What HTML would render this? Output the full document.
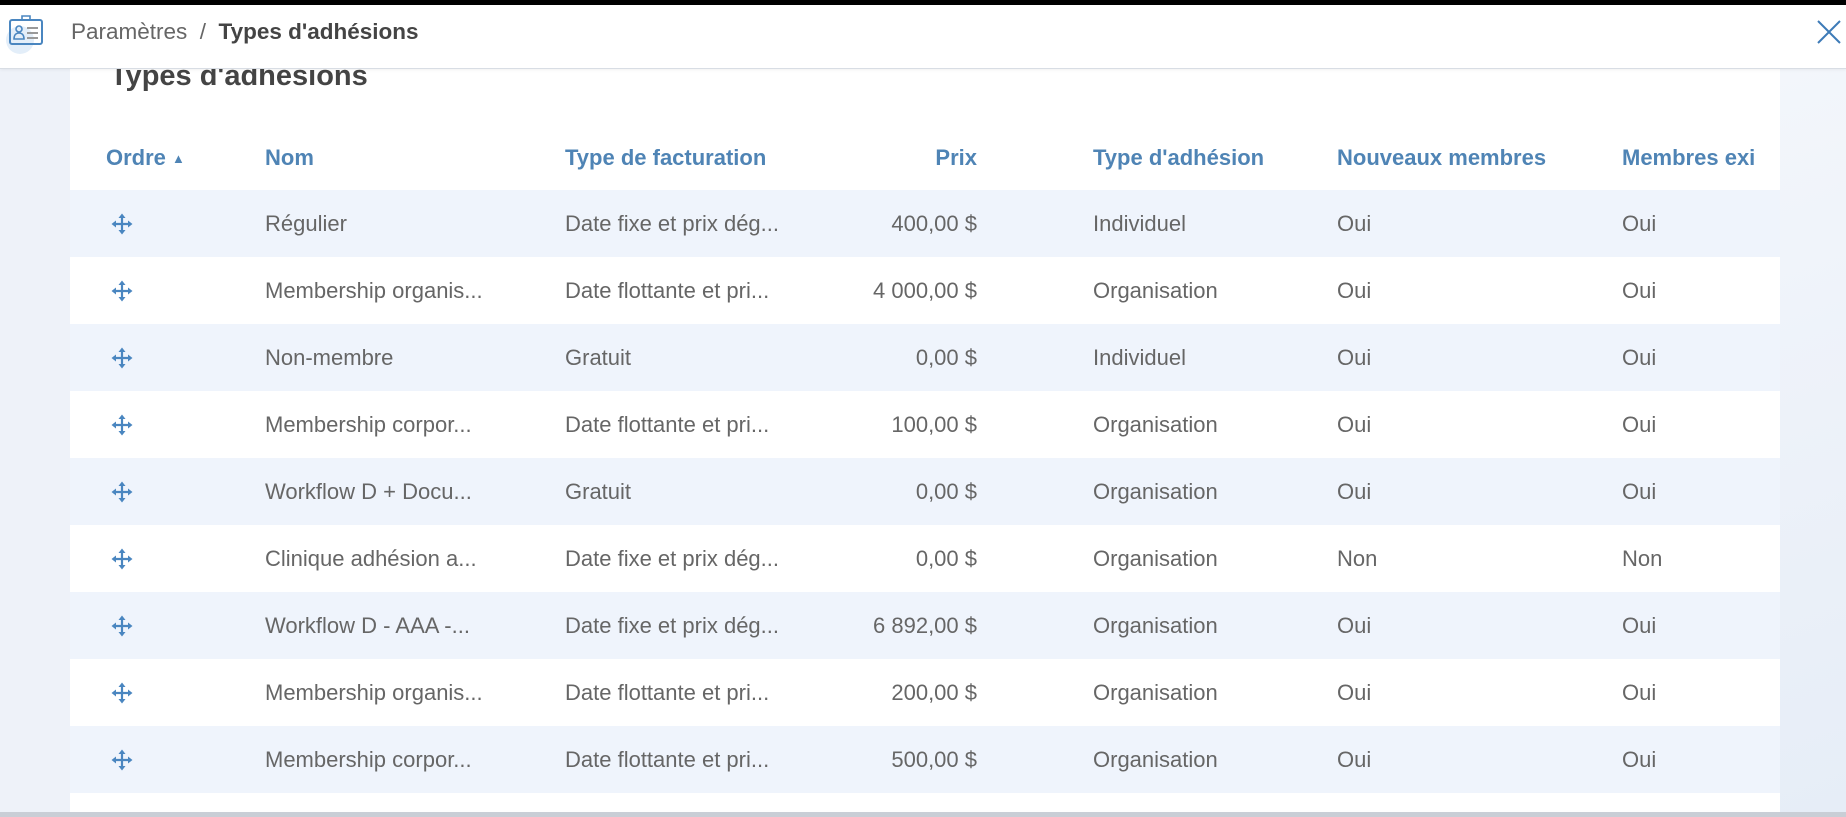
<!DOCTYPE html>
<html><head><meta charset="utf-8"><style>
*{margin:0;padding:0;box-sizing:border-box}
body{width:1846px;height:817px;overflow:hidden;background:#eef2f9;font-family:"Liberation Sans",sans-serif;position:relative}
.top{position:absolute;left:0;top:0;width:1846px;height:5px;background:#000}
.hdr{position:absolute;left:0;top:5px;width:1846px;height:64px;background:#fff;border-bottom:1px solid #d8dde4;z-index:3;box-shadow:0 1px 3px rgba(0,0,0,.06)}
.crumb{position:absolute;left:71px;top:14px;font-size:22.5px;color:#666}
.crumb b{color:#444}
.card{position:absolute;left:70px;top:69px;width:1710px;height:744px;background:#fff}
.rightbg{position:absolute;left:1780px;top:69px;width:66px;height:744px;background:linear-gradient(160deg,#f3f6fb,#e6edf7)}
.title{position:absolute;left:110px;top:60px;font-size:29px;font-weight:bold;color:#444;z-index:1}
.th{position:absolute;top:145px;font-size:22px;color:#4f84b5;font-weight:bold;z-index:1;white-space:nowrap}
.row{position:absolute;left:70px;width:1710px;height:67px}
.row.s{background:#eff4fc}
.c{position:absolute;top:21px;font-size:22px;color:#666;white-space:nowrap}
.bottom{position:absolute;left:0;top:812px;width:1846px;height:5px;background:#c9ced6}
</style></head><body>
<div class="top"></div>
<div class="rightbg"></div>
<div class="card"></div>
<div class="hdr">
<svg style="position:absolute;left:6px;top:9px" width="44" height="42" viewBox="0 0 44 42"><circle cx="14" cy="26" r="14" fill="#dceaf7" opacity=".8"/><rect x="4" y="6" width="32" height="24" rx="2" fill="none" stroke="#4a86c0" stroke-width="2"/><path d="M16 6V2h8v4" fill="none" stroke="#4a86c0" stroke-width="1.6"/><circle cx="13" cy="15" r="3" fill="none" stroke="#4a86c0" stroke-width="1.6"/><path d="M8 25c0-4 2-6 5-6s5 2 5 6z" fill="none" stroke="#4a86c0" stroke-width="1.6"/><path d="M21 14h11M21 19h11M21 24h11" stroke="#999" stroke-width="2"/></svg>
<div class="crumb">Paramètres&nbsp; / &nbsp;<b>Types d'adhésions</b></div>
<svg style="position:absolute;left:1816px;top:14px" width="26" height="26" viewBox="0 0 26 26"><path d="M2 2L24 24M24 2L2 24" stroke="#3d7bb7" stroke-width="2"/></svg>
</div>
<div class="title">Types d'adhésions</div>
<div class="th" style="left:106px">Ordre <span style="font-size:13px;position:relative;top:-2px">&#9650;</span></div>
<div class="th" style="left:265px">Nom</div>
<div class="th" style="left:565px">Type de facturation</div>
<div class="th" style="right:869px">Prix</div>
<div class="th" style="left:1093px">Type d'adhésion</div>
<div class="th" style="left:1337px">Nouveaux membres</div>
<div class="th" style="left:1622px;width:132px;overflow:hidden">Membres existants</div>
<div id="rows"></div>
<div class="bottom"></div>
<script>
var d=[["Régulier","Date fixe et prix dég...","400,00 $","Individuel","Oui","Oui"],
["Membership organis...","Date flottante et pri...","4 000,00 $","Organisation","Oui","Oui"],
["Non-membre","Gratuit","0,00 $","Individuel","Oui","Oui"],
["Membership corpor...","Date flottante et pri...","100,00 $","Organisation","Oui","Oui"],
["Workflow D + Docu...","Gratuit","0,00 $","Organisation","Oui","Oui"],
["Clinique adhésion a...","Date fixe et prix dég...","0,00 $","Organisation","Non","Non"],
["Workflow D - AAA -...","Date fixe et prix dég...","6 892,00 $","Organisation","Oui","Oui"],
["Membership organis...","Date flottante et pri...","200,00 $","Organisation","Oui","Oui"],
["Membership corpor...","Date flottante et pri...","500,00 $","Organisation","Oui","Oui"]];
var ic='<svg style="position:absolute;left:40px;top:22px" width="24" height="24" viewBox="0 0 24 24" fill="#4a86c0"><path d="M12 5v14M5 12h14" fill="none" stroke="#4a86c0" stroke-width="2.2"/><path d="M12 1.5l-3.5 4.5h7zM12 22.5l-3.5-4.5h7zM1.5 12l4.5-3.5v7zM22.5 12l-4.5-3.5v7z"/></svg>';
var h='';
d.forEach(function(r,i){
h+='<div class="row'+(i%2==0?' s':'')+'" style="top:'+(190+i*67)+'px">'+ic+
'<div class="c" style="left:195px">'+r[0]+'</div>'+
'<div class="c" style="left:495px">'+r[1]+'</div>'+
'<div class="c" style="right:803px">'+r[2]+'</div>'+
'<div class="c" style="left:1023px">'+r[3]+'</div>'+
'<div class="c" style="left:1267px">'+r[4]+'</div>'+
'<div class="c" style="left:1552px">'+r[5]+'</div></div>';});
document.getElementById('rows').innerHTML=h;
</script>
</body></html>
